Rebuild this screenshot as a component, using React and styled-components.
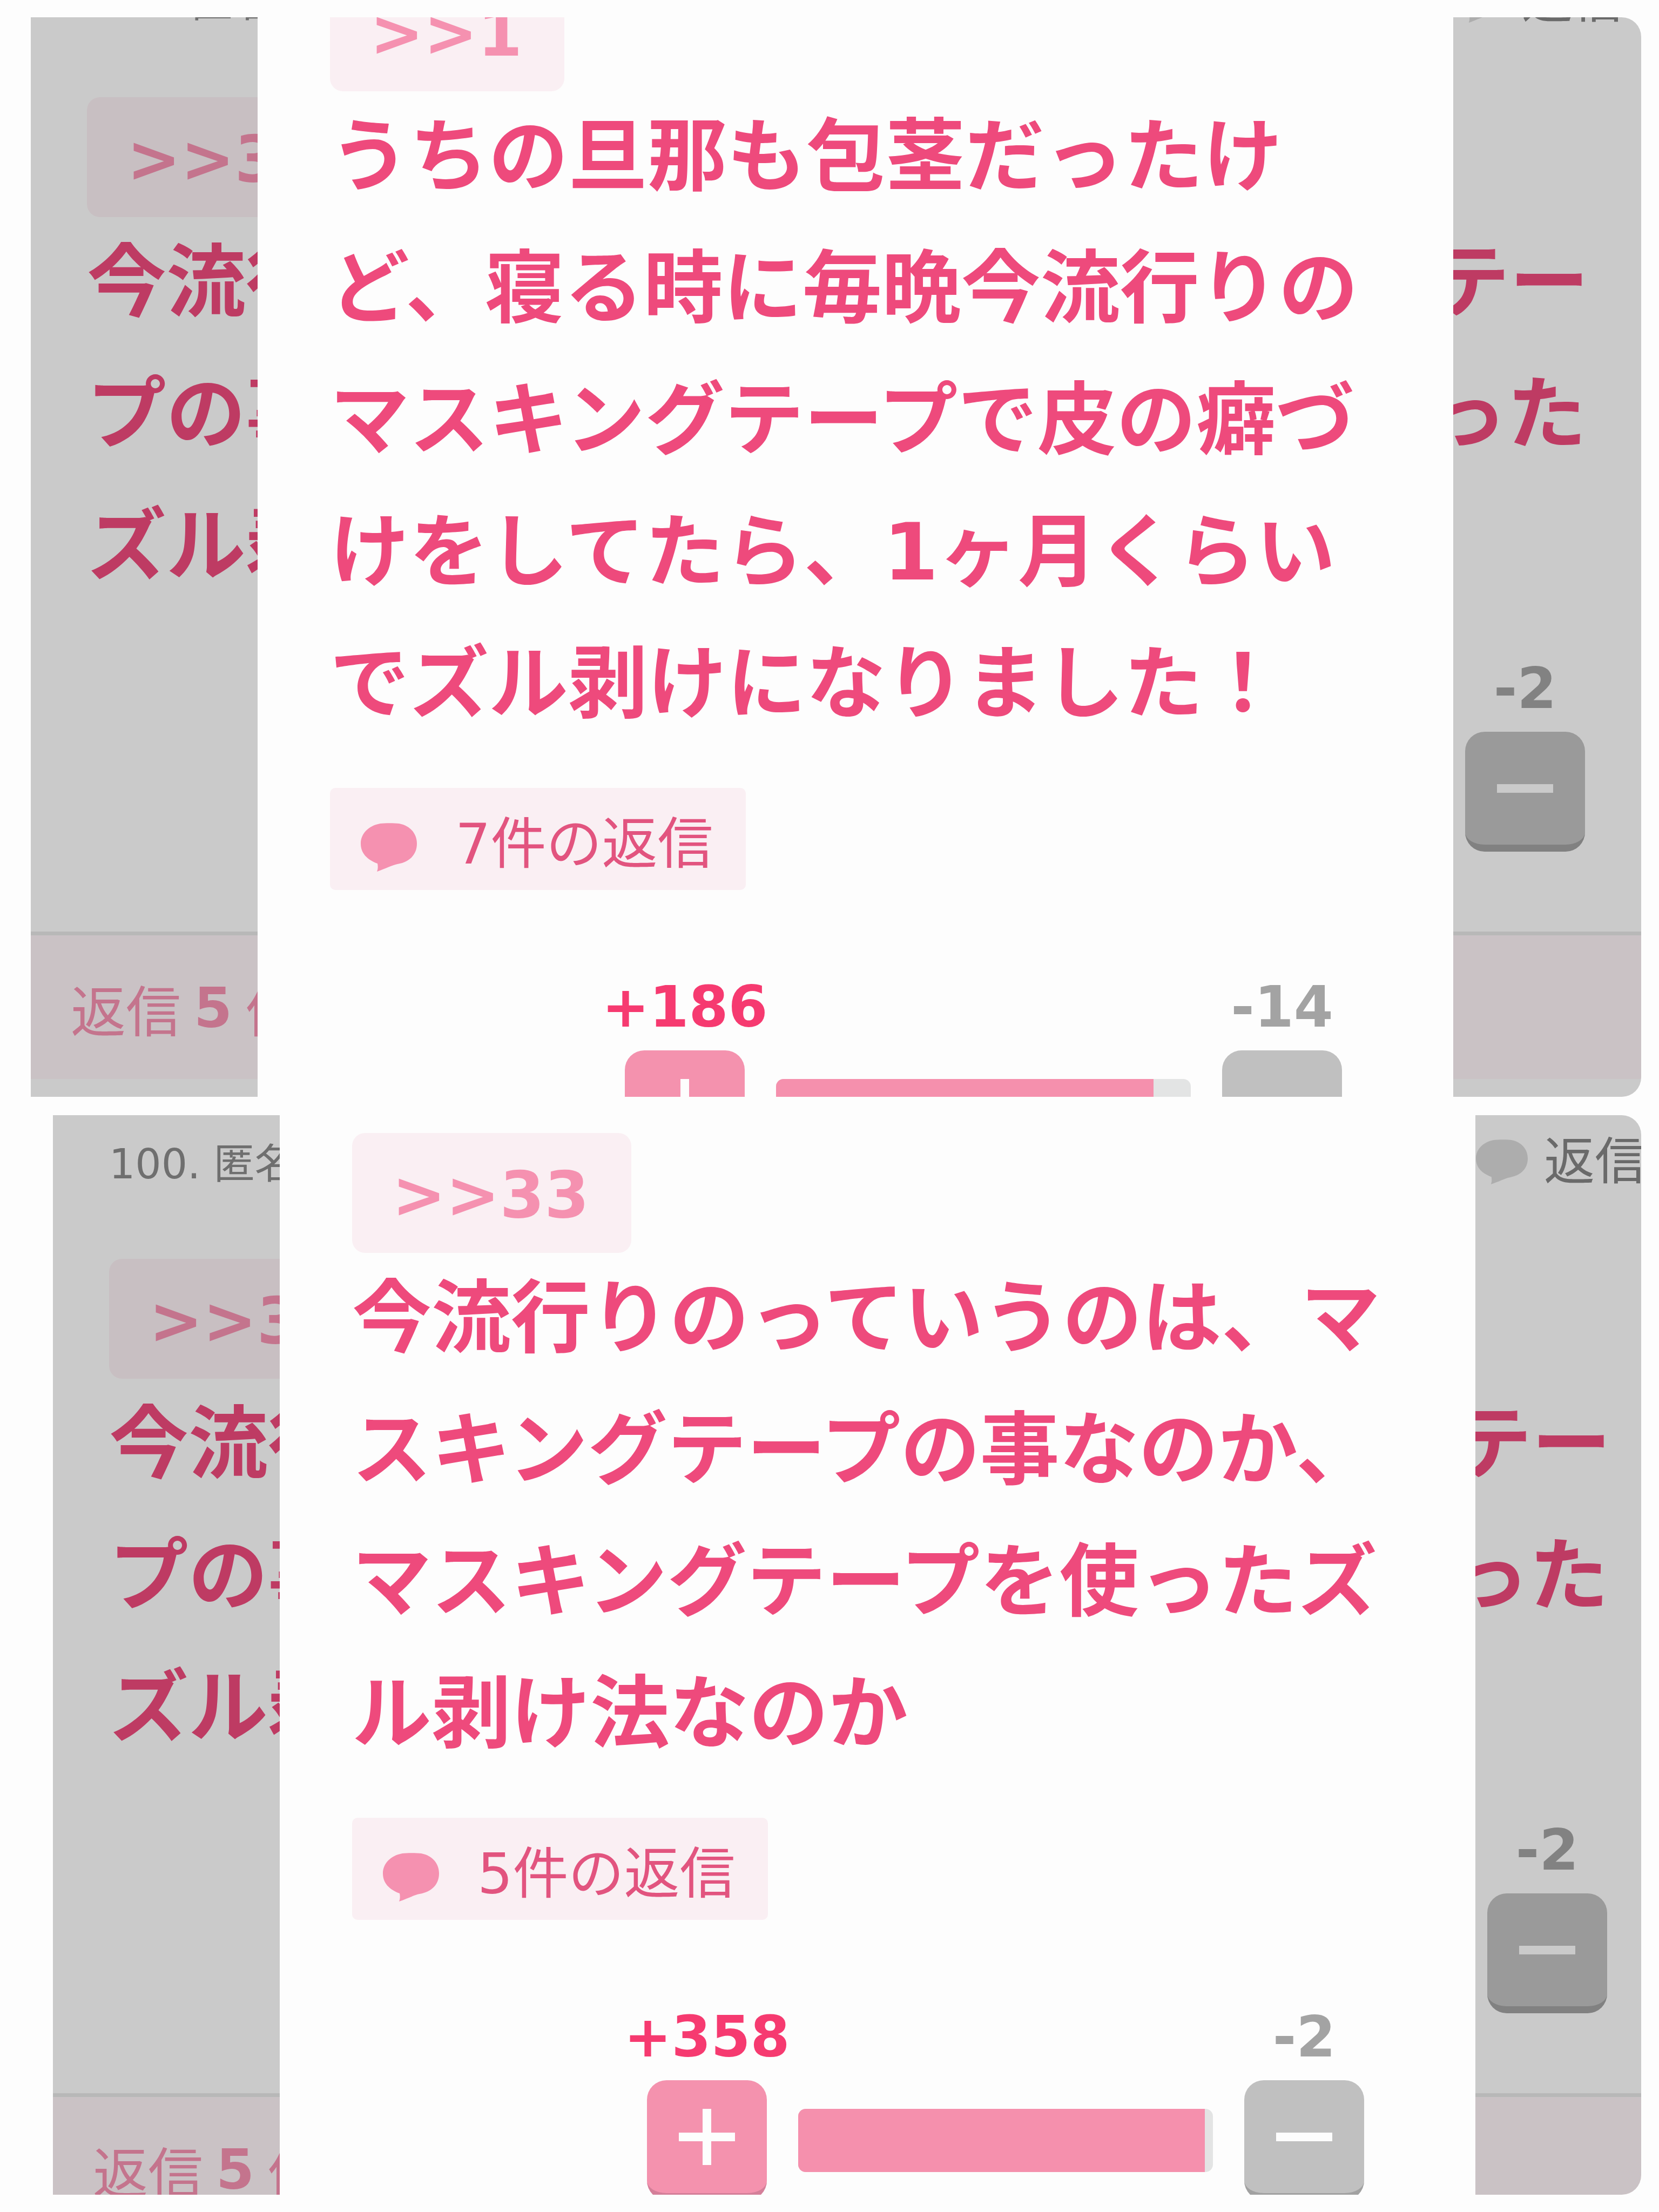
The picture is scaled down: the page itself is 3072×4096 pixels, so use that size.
import React from 'react'
import styled, { createGlobalStyle } from 'styled-components'

const GlobalStyle = createGlobalStyle`
  * {
    box-sizing: border-box;
  }
  body {
    margin: 0;
    background: #fdfdfd;
    font-family: "DejaVu Sans", "Noto Sans CJK JP", sans-serif;
  }
  button {
    font-family: inherit;
    border: 0;
    padding: 0;
    margin: 0;
    background: none;
    cursor: pointer;
  }
  p {
    margin: 0;
  }
`

const Page = styled.main`
  display: grid;
  grid-template-rows: repeat(2, minmax(0, 1fr));
  gap: 34px;
  height: 100vh;
  padding: 32px 33px 32px 57px;
`

const Screen = styled.section`
  margin-left: ${(p) => p.$indent || 0}px;
  overflow: hidden;
  border-radius: 0 36px 36px 0;
`

// the page and the popup share one cell, the popup is stacked on top
const Layers = styled.div`
  display: grid;
  min-height: calc(100% + ${(p) => p.$scrolled}px);
  margin-top: -${(p) => p.$scrolled}px;
`

const Thread = styled.article`
  grid-area: 1 / 1;
  display: flex;
  flex-direction: column;
  margin-right: -${(p) => p.$bleed || 0}px;
  padding: 37px 80px 0 104px;
  background: #fdfdfd;
  filter: brightness(0.8);
`

const Popup = styled.article`
  grid-area: 1 / 1;
  z-index: 1;
  margin: 0 ${(p) => p.$right}px 0 420px;
  padding: 33px 134px 0;
  background: #fdfdfd;
`

const ThreadHead = styled.header`
  display: flex;
  justify-content: space-between;
  align-items: center;
  height: 100px;
  margin: 0 -47px 129px 0;
  color: #8b8b8b;
  font-size: 76px;
`

const Author = styled.span`
  padding-bottom: 6px;
`

const ReplyButton = styled.button`
  display: flex;
  align-items: center;
  gap: 30px;
  color: #858585;
  font-size: 94px;
  line-height: 100px;
  svg {
    width: 96px;
    color: #d8d8d8;
  }
`

const Quote = styled.a`
  display: block;
  width: fit-content;
  height: 222px;
  padding: 8px 78px 0 74px;
  border-radius: 24px;
  background: #faeff3;
  color: #f591b0;
  font-size: 119px;
  font-weight: 700;
  line-height: 214px;
  text-decoration: none;
`

const Body = styled.p`
  color: #ee4a7c;
  font-size: 147px;
  font-weight: 700;
  line-height: 244px;
`

const ReplyCount = styled.button`
  display: flex;
  align-items: center;
  gap: 71px;
  height: 189px;
  margin-top: 70px;
  padding: 18px 60px 0 57px;
  border-radius: 10px;
  background: #faeff3;
  color: #e2547f;
  font-size: 103px;
  line-height: 120px;
  svg {
    width: 104px;
    margin-top: 12px;
    color: #f591b0;
  }
`

const VoteRow = styled.div`
  display: flex;
  justify-content: flex-end;
  align-items: flex-end;
  gap: 58px;
  margin-top: ${(p) => p.$top}px;
  padding-right: ${(p) => p.$right || 0}px;
`

const VoteColumn = styled.div`
  display: flex;
  flex-direction: column;
  align-items: center;
  gap: 20px;
  width: 222px;
`

const VoteNumber = styled.span`
  color: ${(p) => (p.$plus ? '#f63a70' : '#a3a3a3')};
  font-size: 105px;
  font-weight: 700;
  line-height: 120px;
  white-space: nowrap;
`

const VoteButton = styled.button`
  display: flex;
  justify-content: center;
  align-items: center;
  width: 222px;
  height: 222px;
  border-bottom: 13px solid ${(p) => (p.$plus ? '#d47f99' : '#a1a1a1')};
  border-radius: 36px;
  background: ${(p) => (p.$plus ? '#f492ae' : '#c0c0c0')};
  color: #fdfdfd;
  svg {
    width: 104px;
  }
`

const Meter = styled.div`
  width: 768px;
  height: 117px;
  margin-bottom: 52px;
  overflow: hidden;
  border-radius: 14px;
  background: #e3e4e4;
`

const MeterFill = styled.div`
  height: 100%;
  background: #f590ad;
`

const RepliesBar = styled.div`
  display: flex;
  align-items: center;
  gap: 24px;
  height: 273px;
  margin: 148px -80px 0 -104px;
  padding: 2px 74px 0;
  border-top: 7px solid #e6e6e6;
  background: #fdf2f6;
  color: #f591b0;
  font-size: 102px;
`

function Bubble() {
  return (
    <svg viewBox="0 0 104 90" fill="currentColor" aria-hidden="true">
      <path d="M36 1C44 0 62 0 71 1C92 5 104 20 104 38C104 58 91 72 68 76C58 78 47 84 30 90C32 85 32 80 31 75C12 68 0 56 0 38C0 20 14 5 36 1Z" />
    </svg>
  )
}

function Sign({ plus }) {
  return (
    <svg viewBox="0 0 104 104" stroke="currentColor" strokeWidth="16" aria-hidden="true">
      <path d={plus ? 'M0 52H104M52 0V104' : 'M0 52H104'} />
    </svg>
  )
}

function Votes({ plus, minus, fill, top, right }) {
  return (
    <VoteRow $top={top} $right={right}>
      <VoteColumn>
        <VoteNumber $plus>+{plus}</VoteNumber>
        <VoteButton $plus type="button" aria-label="プラス">
          <Sign plus />
        </VoteButton>
      </VoteColumn>
      <Meter>
        <MeterFill style={{ width: `${fill}%` }} />
      </Meter>
      <VoteColumn>
        <VoteNumber>-{minus}</VoteNumber>
        <VoteButton type="button" aria-label="マイナス">
          <Sign />
        </VoteButton>
      </VoteColumn>
    </VoteRow>
  )
}

const first = {
  quote: 1,
  text: 'うちの旦那も包茎だったけど、寝る時に毎晩今流行りのマスキングテープで皮の癖づけをしてたら、1ヶ月くらいでズル剥けになりました！',
  replies: 7,
  plus: 186,
  minus: 14,
  fill: 91,
}

const second = {
  quote: 33,
  text: '今流行りのっていうのは、マスキングテープの事なのか、マスキングテープを使ったズル剥け法なのか',
  replies: 5,
  plus: 358,
  minus: 2,
  fill: 98,
}

function ThreadPost({ comment, bleed }) {
  return (
    <Thread $bleed={bleed}>
      <ThreadHead>
        <Author>100. 匿名</Author>
        <ReplyButton type="button">
          <Bubble />
          返信
        </ReplyButton>
      </ThreadHead>
      <Quote href="#">&gt;&gt;{comment.quote}</Quote>
      <Body>{comment.text}</Body>
      <Votes plus={comment.plus} minus={comment.minus} fill={comment.fill} top={81} right={24} />
      <RepliesBar>
        <span>返信</span>
        <b>{comment.replies}</b>
        <span>件</span>
      </RepliesBar>
    </Thread>
  )
}

function CommentPopup({ comment, right }) {
  return (
    <Popup $right={right}>
      <Quote href="#">&gt;&gt;{comment.quote}</Quote>
      <Body>{comment.text}</Body>
      <ReplyCount type="button">
        <Bubble />
        {comment.replies}件の返信
      </ReplyCount>
      <Votes plus={comment.plus} minus={comment.minus} fill={comment.fill} top={157} right={72} />
    </Popup>
  )
}

function App() {
  return (
    <>
      <GlobalStyle />
      <Page>
        <Screen>
          <Layers $scrolled={118}>
            <ThreadPost comment={second} />
            <CommentPopup comment={first} right={348} />
          </Layers>
        </Screen>
        <Screen $indent={41}>
          <Layers $scrolled={0}>
            <ThreadPost comment={second} bleed={41} />
            <CommentPopup comment={second} right={307} />
          </Layers>
        </Screen>
      </Page>
    </>
  )
}

export default App
